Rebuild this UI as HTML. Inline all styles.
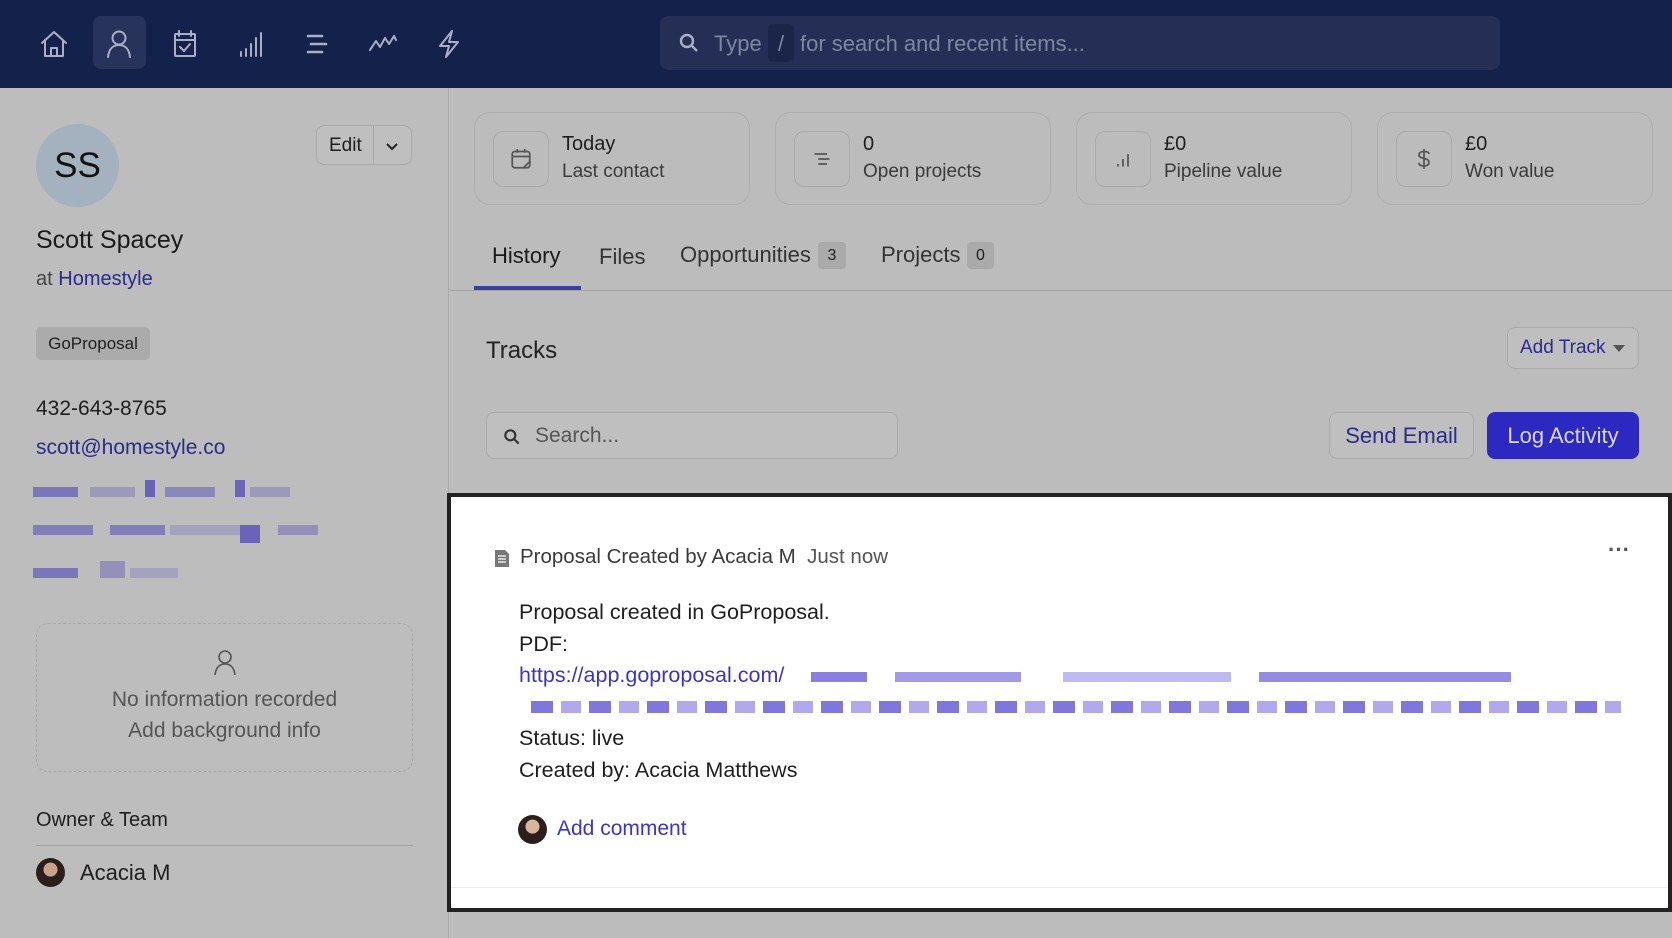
<!DOCTYPE html>
<html><head><meta charset="utf-8"><style>
*{box-sizing:border-box;margin:0;padding:0}
body{width:1672px;height:938px;overflow:hidden;background:#bcbcbc;font-family:"Liberation Sans",Arial,sans-serif;color:#1e1e1e;position:relative}
.abs{position:absolute}
.nav{left:0;top:0;width:1672px;height:88px;background:#14214b}
.ic{position:absolute;top:24px;width:40px;height:40px}
.ic svg{width:40px;height:40px;fill:none;stroke:#a9b0c6;stroke-width:2;stroke-linecap:round;stroke-linejoin:round}
.search{left:660px;top:16px;width:840px;height:54px;background:#252f55;border-radius:8px;color:#7d86a3;font-size:22px}
.left{left:0;top:88px;width:449px;height:850px;background:#bdbdbd;border-right:1px solid #aaa}
.card{border:1px solid #aeaeae;border-radius:16px;height:93px;top:112px;width:276px}
.card .box{position:absolute;left:18px;top:18px;width:56px;height:56px;border:1px solid #aaa;border-radius:10px}
.card .v{position:absolute;left:87px;top:20px;font-size:20px;color:#1e1e1e}
.card .l{position:absolute;left:87px;top:48px;font-size:19px;color:#3a3a3a}
.card svg{position:absolute;left:12px;top:12px;width:30px;height:30px;fill:none;stroke:#555;stroke-width:1.4}
.blur span{position:absolute;height:10px;background:#6b63b8}
.btn{border:1px solid #aaa;border-radius:8px;background:#bfbfbf}
</style></head><body>
<div class="abs nav">
  <div class="abs" style="left:93px;top:16px;width:53px;height:53px;background:#27335a;border-radius:8px"></div>
  <div class="ic" style="left:34px"><svg viewBox="0 0 40 40"><path d="M8 19 L20 8 L32 19 M11 16 V32 H29 V16 M17 32 V24 H23 V32"/></svg></div>
  <div class="ic" style="left:99px"><svg viewBox="0 0 40 40"><circle cx="20" cy="14" r="6.5"/><path d="M9 33 C10 24 15 21 20 21 C25 21 30 24 31 33"/></svg></div>
  <div class="ic" style="left:165px"><svg viewBox="0 0 40 40"><rect x="10" y="10" width="20" height="22" rx="1"/><path d="M10 16 H30 M14 7 V12 M26 7 V12 M15 23 L19 27 L25 20"/></svg></div>
  <div class="ic" style="left:231px"><svg viewBox="0 0 40 40"><path d="M10 32 V28 M15 32 V25 M20 32 V20 M25 32 V14 M30 32 V9"/></svg></div>
  <div class="ic" style="left:297px"><svg viewBox="0 0 40 40" style="stroke-width:2.6"><path d="M11 12 H25 M14 20 H29 M11 28 H25"/></svg></div>
  <div class="ic" style="left:363px"><svg viewBox="0 0 40 40"><path d="M7 26 L13 17 L17 23 L22 14 L26 20 L31 12 L33 16"/></svg></div>
  <div class="ic" style="left:429px"><svg viewBox="0 0 40 40"><path d="M23 7 L11 22 H20 L17 33 L29 18 H20 Z"/></svg></div>
  <div class="abs search">
    <svg class="abs" style="left:17px;top:15px" width="24" height="24" viewBox="0 0 24 24" fill="none" stroke="#a9b0c6" stroke-width="2.4"><circle cx="10" cy="10" r="6"/><path d="M15 15 L20 20"/></svg>
    <span class="abs" style="left:54px;top:15px">Type</span>
    <span class="abs" style="left:108px;top:8px;width:26px;height:38px;background:#1b2548;border-radius:5px;text-align:center;line-height:40px">/</span>
    <span class="abs" style="left:140px;top:15px">for search and recent items...</span>
  </div>
</div>

<div class="abs left">
  <div class="abs" style="left:36px;top:36px;width:83px;height:83px;border-radius:50%;background:#a3b2be;text-align:center;line-height:83px;font-size:35px;color:#111">SS</div>
  <div class="abs btn" style="left:316px;top:37px;width:96px;height:40px">
    <span class="abs" style="left:12px;top:9px;font-size:19px">Edit</span>
    <div class="abs" style="left:56px;top:0;width:1px;height:38px;background:#aaa"></div>
    <svg class="abs" style="left:67px;top:12px" width="16" height="16" viewBox="0 0 16 16" fill="none" stroke="#222" stroke-width="2"><path d="M3 6 L8 11 L13 6"/></svg>
  </div>
  <div class="abs" style="left:36px;top:138px;font-size:25px;color:#1a1a1a">Scott Spacey</div>
  <div class="abs" style="left:36px;top:180px;font-size:20px;color:#444">at <span style="color:#2c2a8a">Homestyle</span></div>
  <div class="abs" style="left:36px;top:239px;width:114px;height:33px;background:#ababab;border-radius:5px;font-size:17px;line-height:33px;text-align:center">GoProposal</div>
  <div class="abs" style="left:36px;top:309px;font-size:21px">432-643-8765</div>
  <div class="abs" style="left:36px;top:348px;font-size:21px;color:#2c2a8a">scott@homestyle.co</div>
  <div class="blur">
    <span style="left:33px;top:399px;width:45px;opacity:.8"></span><span style="left:90px;top:399px;width:45px;opacity:.4"></span><span style="left:145px;top:392px;width:10px;height:17px"></span><span style="left:165px;top:399px;width:50px;opacity:.6"></span><span style="left:235px;top:392px;width:10px;height:17px"></span><span style="left:250px;top:399px;width:40px;opacity:.4"></span>
    <span style="left:33px;top:437px;width:60px;opacity:.7"></span><span style="left:110px;top:437px;width:55px;opacity:.7"></span><span style="left:170px;top:437px;width:80px;opacity:.3"></span><span style="left:240px;top:437px;width:20px;height:18px"></span><span style="left:278px;top:437px;width:40px;opacity:.5"></span>
    <span style="left:33px;top:480px;width:45px;opacity:.8"></span><span style="left:100px;top:473px;width:25px;height:17px;opacity:.5"></span><span style="left:130px;top:480px;width:48px;opacity:.3"></span>
  </div>
  <div class="abs" style="left:36px;top:535px;width:377px;height:149px;border:1px dashed #a8a8a8;border-radius:12px;text-align:center;color:#555;font-size:21px">
    <svg style="margin-top:24px" width="26" height="28" viewBox="0 0 26 28" fill="none" stroke="#555" stroke-width="1.6"><circle cx="13" cy="9" r="6"/><path d="M3 27 C4 19 8 16 13 16 C18 16 22 19 23 27"/></svg>
    <div style="margin-top:6px">No information recorded</div>
    <div style="margin-top:7px">Add background info</div>
  </div>
  <div class="abs" style="left:36px;top:721px;font-size:20px">Owner &amp; Team</div>
  <div class="abs" style="left:36px;top:757px;width:377px;height:1px;background:#a2a2a2"></div>
  <div class="abs" style="left:36px;top:770px;width:29px;height:29px;border-radius:50%;background:radial-gradient(circle at 50% 40%,#c9a48b 0 30%,#2a1f1c 32%)"></div>
  <div class="abs" style="left:80px;top:772px;font-size:22px">Acacia M</div>
</div>

<div class="abs card" style="left:474px"><div class="box"><svg viewBox="0 0 24 24"><rect x="5" y="6" width="14" height="13" rx="2"/><path d="M5 10 H19 M9 4 V7 M15 4 V7 M14 19 L19 14"/></svg></div><div class="v">Today</div><div class="l">Last contact</div></div>
<div class="abs card" style="left:775px"><div class="box"><svg viewBox="0 0 24 24"><path d="M6 8 H16 M9 12 H18 M9 16 H16"/></svg></div><div class="v">0</div><div class="l">Open projects</div></div>
<div class="abs card" style="left:1076px"><div class="box"><svg viewBox="0 0 24 24"><path d="M8 18 V16 M12 18 V12 M16 18 V8"/></svg></div><div class="v">£0</div><div class="l">Pipeline value</div></div>
<div class="abs card" style="left:1377px"><div class="box"><svg viewBox="0 0 24 24"><path d="M12 4 V20 M16 8 C16 6.5 14 6 12 6 C9.5 6 8 7 8 8.7 C8 12.5 16 10.5 16 14.8 C16 16.7 14 17.6 12 17.6 C9.5 17.6 8 16.7 8 15"/></svg></div><div class="v">£0</div><div class="l">Won value</div></div>

<div class="abs" style="left:492px;top:243px;font-size:22px;color:#1a1a1a">History</div>
<div class="abs" style="left:599px;top:244px;font-size:22px;color:#333">Files</div>
<div class="abs" style="left:680px;top:242px;font-size:22px;color:#333">Opportunities</div>
<div class="abs" style="left:818px;top:242px;width:28px;height:27px;background:#aaa;border-radius:4px;font-size:16px;text-align:center;line-height:27px">3</div>
<div class="abs" style="left:881px;top:242px;font-size:22px;color:#333">Projects</div>
<div class="abs" style="left:967px;top:242px;width:27px;height:27px;background:#aaa;border-radius:4px;font-size:16px;text-align:center;line-height:27px">0</div>
<div class="abs" style="left:450px;top:290px;width:1222px;height:1px;background:#a5a5a5"></div>
<div class="abs" style="left:474px;top:286px;width:107px;height:4px;background:#3d3ca0"></div>

<div class="abs" style="left:486px;top:337px;font-size:24px;color:#222">Tracks</div>
<div class="abs btn" style="left:1507px;top:327px;width:132px;height:42px;color:#2c2a8a;font-size:19px;line-height:40px;padding-left:12px">Add Track <span style="display:inline-block;border:6px solid transparent;border-top:7px solid #555;vertical-align:-5px;margin-left:2px"></span></div>
<div class="abs btn" style="left:486px;top:412px;width:412px;height:47px;border-radius:8px">
  <svg class="abs" style="left:15px;top:14px" width="20" height="20" viewBox="0 0 24 24" fill="none" stroke="#333" stroke-width="2.6"><circle cx="10" cy="10" r="6"/><path d="M15 15 L20 20"/></svg>
  <span class="abs" style="left:48px;top:11px;font-size:21px;color:#555">Search...</span>
</div>
<div class="abs btn" style="left:1329px;top:412px;width:145px;height:47px;color:#2c2a8a;font-size:22px;text-align:center;line-height:45px">Send Email</div>
<div class="abs" style="left:1487px;top:412px;width:152px;height:47px;background:#2d28bf;border-radius:8px;color:#d8d8f0;font-size:22px;text-align:center;line-height:47px">Log Activity</div>

<div class="abs" style="left:447px;top:493px;width:1225px;height:419px;border:4px solid #222;background:#fff">
  <svg class="abs" style="left:42px;top:50px" width="18" height="22" viewBox="0 0 18 22"><path d="M2 3 H12 L16 7 V20 H2 Z" fill="#777"/><path d="M5 9 H13 M5 12 H13 M5 15 H13" stroke="#fff" stroke-width="1.3"/></svg>
  <div class="abs" style="left:69px;top:48px;font-size:20.5px;color:#3a3a3a">Proposal Created by Acacia M&nbsp;&nbsp;<span style="color:#555">Just now</span></div>
  <div class="abs" style="left:1157px;top:40px;font-size:22px;color:#555;letter-spacing:0px;font-weight:bold">···</div>
  <div class="abs" style="left:68px;top:100px;font-size:21.5px;color:#1e1e1e;line-height:31.5px">
    Proposal created in GoProposal.<br>PDF:<br><span style="color:#3b34c9">https://app.goproposal.com/</span><br><br>Status: live<br>Created by: Acacia Matthews
  </div>
  <div class="blur">
    <span style="left:360px;top:175px;width:700px;height:10px;background:linear-gradient(90deg,#6a5fd6 0 8%,#fff 8% 12%,#8a80e0 12% 30%,#fff 30% 36%,#b0a8ee 36% 60%,#fff 60% 64%,#7a70dc 64% 100%);opacity:.8"></span>
    <span style="left:80px;top:204px;width:1090px;height:12px;background:repeating-linear-gradient(90deg,#6a5fd6 0 22px,#fff 22px 30px,#a39ae8 30px 50px,#fff 50px 58px);opacity:.85"></span>
  </div>
  <div class="abs" style="left:67px;top:318px;width:29px;height:29px;border-radius:50%;background:radial-gradient(circle at 50% 40%,#d9b59a 0 30%,#2a1f1c 32%)"></div>
  <div class="abs" style="left:106px;top:320px;font-size:21px;color:#3b34c9">Add comment</div>
  <div class="abs" style="left:0;top:390px;width:1217px;height:1px;background:#eee"></div>
</div>
</body></html>
